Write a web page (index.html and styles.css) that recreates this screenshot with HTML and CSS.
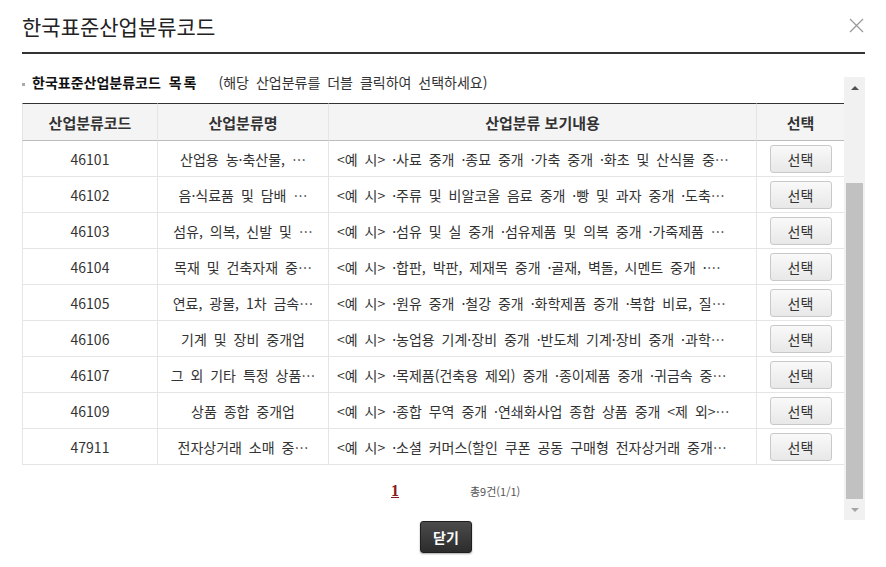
FILE: index.html
```html
<!DOCTYPE html>
<html lang="ko">
<head>
<meta charset="utf-8">
<title>한국표준산업분류코드</title>
<link rel="stylesheet" href="styles.css">
</head>
<body>
<div class="popup">
  <div class="pop-head">
    <h1 class="pop-title">한국표준산업분류코드</h1>
    <button class="close-x" type="button" aria-label="닫기">
      <svg width="15" height="15" viewBox="0 0 15 15"><path d="M1 1L14 14M14 1L1 14" stroke="#9a9a9a" stroke-width="1.3" fill="none"/></svg>
    </button>
  </div>
  <div class="scroll-area">
    <div class="scroll-content">
      <h2 class="sub-title"><span class="bullet"></span><strong>한국표준산업분류코드 <span class="sub-list">목록</span></strong><span class="sub-desc">(해당 산업분류를 더블 클릭하여 선택하세요)</span></h2>
      <table class="list-table">
        <colgroup><col class="c-code"><col class="c-name"><col class="c-desc"><col class="c-sel"></colgroup>
        <thead>
          <tr><th>산업분류코드</th><th>산업분류명</th><th>산업분류 보기내용</th><th>선택</th></tr>
        </thead>
        <tbody>
          <tr><td>46101</td><td class="name">산업용 농·축산물, …</td><td class="desc">&lt;예 시&gt; ·사료 중개 ·종묘 중개 ·가축 중개 ·화초 및 산식물 중…</td><td class="sel"><button class="btn-sel" type="button">선택</button></td></tr>
          <tr><td>46102</td><td class="name">음·식료품 및 담배 …</td><td class="desc">&lt;예 시&gt; ·주류 및 비알코올 음료 중개 ·빵 및 과자 중개 ·도축…</td><td class="sel"><button class="btn-sel" type="button">선택</button></td></tr>
          <tr><td>46103</td><td class="name">섬유, 의복, 신발 및 …</td><td class="desc">&lt;예 시&gt; ·섬유 및 실 중개 ·섬유제품 및 의복 중개 ·가죽제품 …</td><td class="sel"><button class="btn-sel" type="button">선택</button></td></tr>
          <tr><td>46104</td><td class="name">목재 및 건축자재 중…</td><td class="desc">&lt;예 시&gt; ·합판, 박판, 제재목 중개 ·골재, 벽돌, 시멘트 중개 ·…</td><td class="sel"><button class="btn-sel" type="button">선택</button></td></tr>
          <tr><td>46105</td><td class="name">연료, 광물, 1차 금속…</td><td class="desc">&lt;예 시&gt; ·원유 중개 ·철강 중개 ·화학제품 중개 ·복합 비료, 질…</td><td class="sel"><button class="btn-sel" type="button">선택</button></td></tr>
          <tr><td>46106</td><td class="name">기계 및 장비 중개업</td><td class="desc">&lt;예 시&gt; ·농업용 기계·장비 중개 ·반도체 기계·장비 중개 ·과학…</td><td class="sel"><button class="btn-sel" type="button">선택</button></td></tr>
          <tr><td>46107</td><td class="name">그 외 기타 특정 상품…</td><td class="desc">&lt;예 시&gt; ·목제품(건축용 제외) 중개 ·종이제품 중개 ·귀금속 중…</td><td class="sel"><button class="btn-sel" type="button">선택</button></td></tr>
          <tr><td>46109</td><td class="name">상품 종합 중개업</td><td class="desc">&lt;예 시&gt; ·종합 무역 중개 ·연쇄화사업 종합 상품 중개 &lt;제 외&gt;…</td><td class="sel"><button class="btn-sel" type="button">선택</button></td></tr>
          <tr><td>47911</td><td class="name">전자상거래 소매 중…</td><td class="desc">&lt;예 시&gt; ·소셜 커머스(할인 쿠폰 공동 구매형 전자상거래 중개…</td><td class="sel"><button class="btn-sel" type="button">선택</button></td></tr>
        </tbody>
      </table>
      <div class="paging">
        <a class="page-num">1</a>
        <span class="page-total">총9건(1/1)</span>
      </div>
    </div>
    <div class="scrollbar" aria-hidden="true">
      <div class="sb-btn"><span class="tri-up"></span></div>
      <div class="sb-track"><div class="sb-thumb"></div></div>
      <div class="sb-btn"><span class="tri-down"></span></div>
    </div>
  </div>
  <div class="pop-foot">
    <button class="btn-close" type="button">닫기</button>
  </div>
</div>
</body>
</html>
```
FILE: styles.css
```css
* { box-sizing: border-box; }
html, body { margin: 0; padding: 0; background: #fff; }
body {
  font-family: "Noto Sans CJK KR", "Noto Sans", sans-serif;
  color: #333;
}
.popup {
  width: 886px;
  height: 567px;
  padding: 0 21px 0 22px;
  overflow: hidden;
}
.pop-head {
  height: 54px;
  border-bottom: 2px solid #333;
  display: flex;
  align-items: center;
  justify-content: space-between;
}
.pop-title {
  margin: 0;
  font-size: 21px;
  font-weight: 400;
  line-height: 28px;
  color: #222;
}
.close-x {
  width: 15px;
  height: 15px;
  padding: 0;
  margin: 0 1px 2px 0;
  border: 0;
  background: none;
  display: flex;
}
.scroll-area {
  display: flex;
  height: 443px;
  margin-top: 23px;
}
.scroll-content {
  flex: 1;
  min-width: 0;
}
.sub-title {
  margin: -3px 0 0;
  font-size: 14px;
  line-height: 16px;
  font-weight: 400;
  color: #333;
  white-space: nowrap;
}
.bullet {
  display: inline-block;
  width: 3px;
  height: 3px;
  background: #aaa;
  vertical-align: middle;
  margin-right: 7px;
}
.sub-title strong { font-weight: 700; color: #111; word-spacing: 4px; }
.sub-list { letter-spacing: 2px; }
.sub-desc { word-spacing: 3px; margin-left: 20px; }
.list-table {
  width: 100%;
  margin-top: 13px;
  table-layout: fixed;
  border-collapse: separate;
  border-spacing: 0;
}
.c-code { width: 135px; }
.c-name { width: 171px; }
.c-desc { width: 428px; }
.c-sel { width: 88px; }
.list-table th,
.list-table td {
  box-sizing: content-box;
  padding: 0;
  border-left: 1px solid #e5e5e5;
  white-space: nowrap;
  overflow: hidden;
  text-overflow: ellipsis;
  text-align: center;
}
.list-table th {
  height: 36px;
  background: #f4f4f4;
  border-top: 1px solid #333;
  border-bottom: 1px solid #bcbcbc;
  font-size: 15px;
  font-weight: 700;
  color: #333;
}
.list-table td {
  height: 35px;
  border-bottom: 1px solid #e5e5e5;
  font-size: 14px;
  color: #333;
  word-spacing: 3px;
}
.list-table td.name { padding: 0 8px; }
.list-table td.desc { text-align: left; padding: 0 6px 0 8px; }
.btn-sel {
  width: 62px;
  height: 28px;
  padding: 0;
  border: 1px solid #c9c9c9;
  border-radius: 3px;
  background: linear-gradient(#f9f9f9, #e8e8e8);
  font-family: "Noto Sans CJK KR", sans-serif;
  font-size: 14px;
  color: #333;
  vertical-align: middle;
}
.paging {
  display: flex;
  align-items: baseline;
  padding-left: 369px;
  margin-top: 16px;
  line-height: 20px;
}
.page-num {
  font-family: "Liberation Serif", serif;
  font-weight: 700;
  font-size: 16px;
  color: #8b1a1a;
  text-decoration: underline;
}
.page-total {
  margin-left: 71px;
  font-size: 11px;
  color: #555;
}
.scrollbar {
  width: 21px;
  background: #f1f1f1;
  display: flex;
  flex-direction: column;
}
.sb-btn {
  height: 21px;
  display: flex;
  align-items: center;
  justify-content: center;
}
.tri-up {
  width: 0; height: 0;
  border-left: 4px solid transparent;
  border-right: 4px solid transparent;
  border-bottom: 4px solid #505050;
}
.tri-down {
  width: 0; height: 0;
  border-left: 4px solid transparent;
  border-right: 4px solid transparent;
  border-top: 4px solid #a3a3a3;
}
.sb-track {
  flex: 1;
  display: flex;
  flex-direction: column;
  justify-content: flex-end;
  align-items: center;
}
.sb-thumb {
  width: 17px;
  height: 316px;
  background: #c1c1c1;
}
.pop-foot {
  padding-left: 398px;
  margin-top: 1px;
}
.btn-close {
  width: 52px;
  height: 32px;
  padding: 0;
  border: 1px solid #1f1f1f;
  border-radius: 3px;
  background: linear-gradient(#4b4b4b, #2c2c2c);
  box-shadow: 0 1px 2px rgba(0,0,0,0.35);
  font-family: "Noto Sans CJK KR", sans-serif;
  font-size: 14px;
  font-weight: 700;
  color: #fff;
}
```
